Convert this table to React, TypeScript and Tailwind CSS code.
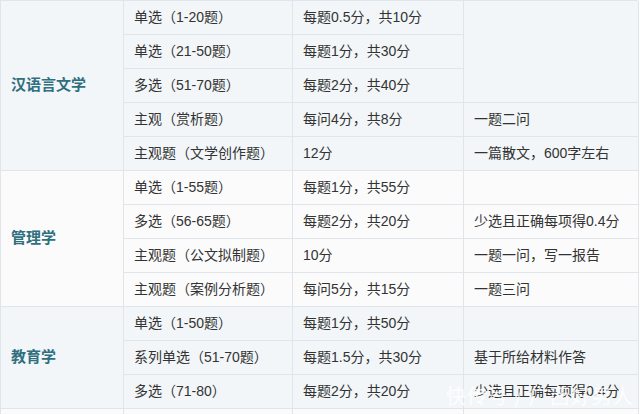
type Row = { q: string; score: string; note?: string; noteSpan?: number; skipNote?: boolean }

type Group = { name: string; light: boolean; rows: Row[] }

const groups: Group[] = [
  {
    name: '汉语言文学',
    light: true,
    rows: [
      { q: '单选（1-20题）', score: '每题0.5分，共10分', note: '', noteSpan: 3 },
      { q: '单选（21-50题）', score: '每题1分，共30分', skipNote: true },
      { q: '多选（51-70题）', score: '每题2分，共40分', skipNote: true },
      { q: '主观（赏析题）', score: '每问4分，共8分', note: '一题二问' },
      { q: '主观题（文学创作题）', score: '12分', note: '一篇散文，600字左右' },
    ],
  },
  {
    name: '管理学',
    light: false,
    rows: [
      { q: '单选（1-55题）', score: '每题1分，共55分', note: '' },
      { q: '多选（56-65题）', score: '每题2分，共20分', note: '少选且正确每项得0.4分' },
      { q: '主观题（公文拟制题）', score: '10分', note: '一题一问，写一报告' },
      { q: '主观题（案例分析题）', score: '每问5分，共15分', note: '一题三问' },
    ],
  },
  {
    name: '教育学',
    light: true,
    rows: [
      { q: '单选（1-50题）', score: '每题1分，共50分', note: '' },
      { q: '系列单选（51-70题）', score: '每题1.5分，共30分', note: '基于所给材料作答' },
      { q: '多选（71-80）', score: '每题2分，共20分', note: '少选且正确每项得0.4分' },
    ],
  },
  {
    name: '',
    light: false,
    rows: [{ q: '', score: '', note: '' }],
  },
]

const rowSpanClass: Record<number, string> = {
  1: 'row-span-1',
  3: 'row-span-3',
  4: 'row-span-4',
  5: 'row-span-5',
}

export default function App() {
  return (
    <div
      className="relative h-[414px] w-[640px] overflow-hidden bg-white text-[14px] text-[#333333]"
      style={{ fontFamily: '"Liberation Sans", "Noto Sans CJK SC", sans-serif' }}
    >
      <div className="grid w-[638px] grid-cols-[123px_169px_171px_175px] auto-rows-[34px] border-t border-l border-[#dfe5ea]">
        {groups.map((g, gi) => {
          const bg = g.light ? 'bg-[#f2f6f8]' : 'bg-[#fbfbfb]'
          return [
            <div
              key={`g${gi}`}
              className={`${rowSpanClass[g.rows.length]} ${bg} flex items-center border-r border-b border-[#dfe5ea] pl-[10px] text-[15px] font-bold text-[#2f6f80]`}
            >
              {g.name}
            </div>,
            ...g.rows.flatMap((r, ri) => {
              const cells = [
                <div key={`q${gi}-${ri}`} className={`${bg} flex items-center border-r border-b border-[#dfe5ea] pl-[10px]`}>
                  {r.q}
                </div>,
                <div key={`s${gi}-${ri}`} className={`${bg} flex items-center border-r border-b border-[#dfe5ea] pl-[10px]`}>
                  {r.score}
                </div>,
              ]
              if (!r.skipNote) {
                cells.push(
                  <div
                    key={`n${gi}-${ri}`}
                    className={`${rowSpanClass[r.noteSpan ?? 1]} ${bg} flex items-center border-r border-b border-[#dfe5ea] pl-[10px]`}
                  >
                    {r.note}
                  </div>
                )
              }
              return cells
            }),
          ]
        })}
      </div>

      {/* watermark */}
      <div
        className="absolute left-[446px] top-[386px] text-[20px] leading-none tracking-[1px] text-white/80"
        style={{ fontFamily: '"Noto Sans CJK SC", sans-serif' }}
      >
        快传号 / 广西好男人
      </div>
    </div>
  )
}
